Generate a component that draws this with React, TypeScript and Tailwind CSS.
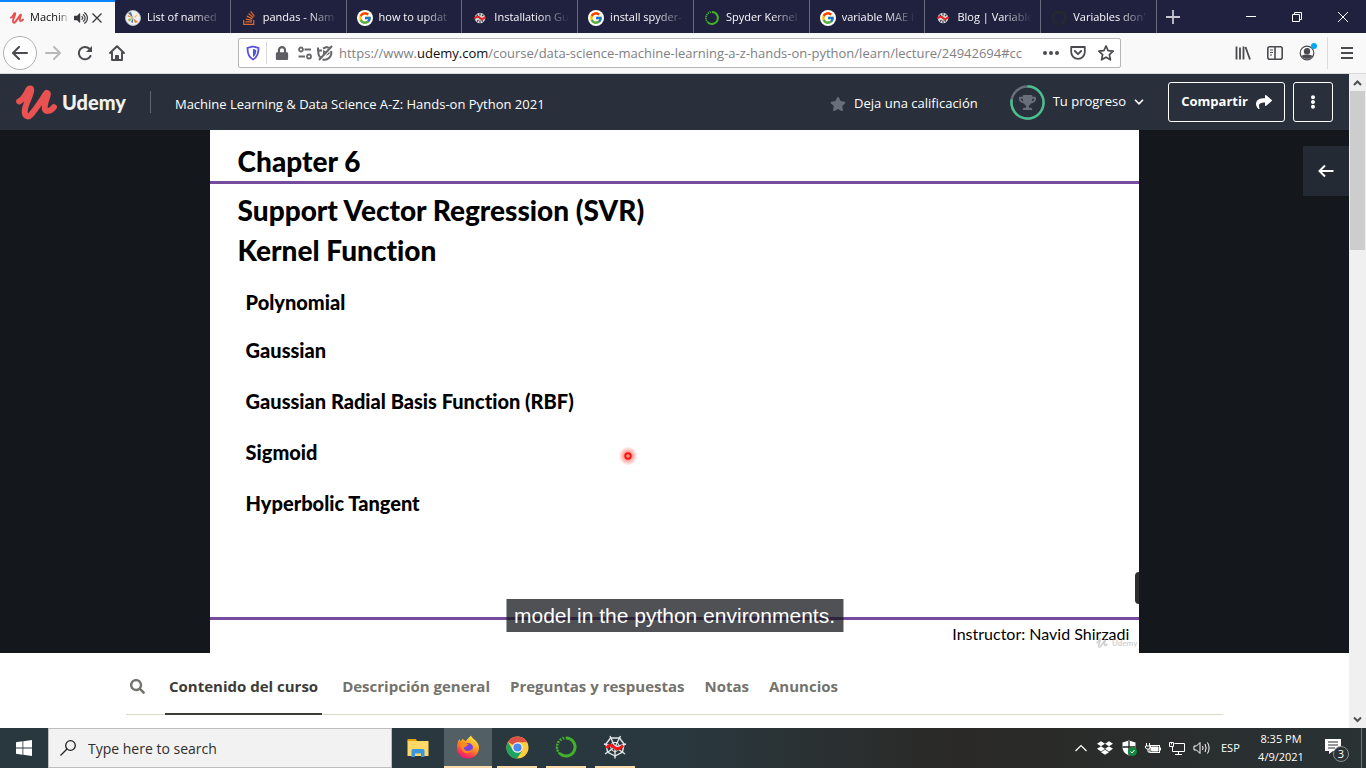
import type { ReactNode } from "react";
import { FcGoogle } from "react-icons/fc";
import {
  FaStackOverflow,
  FaGithub,
  FaLock,
  FaStar,
  FaTrophy,
  FaShare,
  FaEllipsisV,
  FaSearch,
  FaDropbox,
  FaVolumeUp,
} from "react-icons/fa";

function UdemyMark({ className }: { className: string }) {
  return (
    <svg viewBox="0 0 40 34" className={className} fill="none" stroke="currentColor" strokeLinecap="round" strokeLinejoin="round">
      <path d="M3 16C7 14 10 9 12 4.500C13 2.500 15.200 3 14.800 5.500C14 12 9 18 8.500 25C8.200 31 12 32 15 28.500C20 22.500 25 15 29 8.500C30 7 31.500 7.500 31 9.500C30 14 27.500 18 28 22.500C28.500 26.500 33.500 26 37 21.500" strokeWidth="5.800" />
    </svg>
  );
}

function GoogleIcon() {
  return (
    <span className="flex size-4 items-center justify-center rounded-full bg-white">
      <FcGoogle className="size-3.5" />
    </span>
  );
}

function SpyderIcon({ className }: { className: string }) {
  return (
    <svg viewBox="0 0 24 24" className={className} fill="none" stroke="#e4e6e7" strokeWidth="1.400">
      <path d="M12 12L7 1M12 12L17.500 1M12 12L1 9M12 12L23 9M12 12L2 19M12 12L22 19M12 12V23.500" />
      <path d="M7.500 3H16.500L21 9L19.500 17L12 21L4.500 17L3 9Z" />
      <path d="M9.500 7.500H14.500L16.500 11L15.500 15L12 17L8.500 15L7.500 11Z" strokeWidth="1" />
      <path d="M3.500 13C6 9.500 8.500 9.500 11.500 12.500C14 15 16.500 14 20 10.500" stroke="#f01414" strokeWidth="3" />
    </svg>
  );
}

function SpyderBadge() {
  return (
    <svg viewBox="0 0 16 16" className="size-4">
      <circle cx="8" cy="8" r="5.300" fill="#d9d9dc" />
      <path d="M8 3V5.500M8 10.500V13M4.500 4.500L6 6M11.500 4.500L10 6M5 11.500L6.500 10M11 11.500L9.500 10" stroke="#44444f" strokeWidth="1.200" />
      <path d="M2.500 8.500C5 6 6.500 6.500 8 8S11.500 9 13.500 7" fill="none" stroke="#e32222" strokeWidth="2" />
    </svg>
  );
}

function AnacondaIcon({ className }: { className: string }) {
  return (
    <svg viewBox="0 0 24 24" className={className} fill="none" stroke="#43b02a">
      <path d="M12 3A9 9 0 1 1 6 18.700" strokeWidth="3" />
      <path d="M6 18.700A9 9 0 0 1 12 3" strokeWidth="2.600" strokeDasharray="1.600 1.400" />
      <path d="M5 18A10.500 10.500 0 0 1 9 2" strokeWidth="1" strokeDasharray="2 1.500" />
    </svg>
  );
}

function MatplotlibIcon() {
  return (
    <svg viewBox="0 0 16 16" className="size-4">
      <circle cx="8" cy="8" r="7.500" fill="#f1f1f1" stroke="#b7bcc8" />
      <path d="M8 8L3 3L6 2Z" fill="#58707e" />
      <path d="M8 8L13 3.500L11 7Z" fill="#e9b23c" />
      <path d="M8 8L13 12L10 13Z" fill="#ef7b36" />
      <path d="M8 8L3 9L4 12Z" fill="#9fb84a" />
      <path d="M8 8L8 13L6 12Z" fill="#3c78b4" />
      <path d="M8 8L2.500 6.500L3 5Z" fill="#e8892f" />
    </svg>
  );
}

const tabs: { title: string; icon: ReactNode }[] = [
  { title: "List of named", icon: <MatplotlibIcon /> },
  { title: "pandas - Nam", icon: <FaStackOverflow className="size-4 text-[#d9682a]" /> },
  { title: "how to updat", icon: <GoogleIcon /> },
  { title: "Installation Gu", icon: <SpyderBadge /> },
  { title: "install spyder-", icon: <GoogleIcon /> },
  { title: "Spyder Kernel", icon: <AnacondaIcon className="size-4" /> },
  { title: "variable MAE i", icon: <GoogleIcon /> },
  { title: "Blog | Variable", icon: <SpyderBadge /> },
  { title: "Variables don'", icon: <FaGithub className="size-4 text-[#24292e]" /> },
];

function TabBar() {
  return (
    <div className="flex h-[33px] shrink-0 bg-[#20213f] text-[11px] text-[#f9f9fa]">
      <div className="flex w-[115px] shrink-0 items-center border-t-2 border-[#0a84ff] bg-[#f9f9fa] pl-2.5 text-[#0c0c0d]">
        <UdemyMark className="h-3 w-3.5 shrink-0 text-[#ea5252]" />
        <span className="ml-1.5 w-10 overflow-hidden whitespace-nowrap mask-r-from-70%">Machin</span>
        <button aria-label="Mute tab" className="ml-1 text-[#38383d]">
          <FaVolumeUp className="size-3.5" />
        </button>
        <button aria-label="Close tab" className="ml-1">
          <svg viewBox="0 0 10 10" className="size-2.5" stroke="#38383d" strokeWidth="1.300">
            <path d="M0.500 0.500L9.500 9.500M9.500 0.500L0.500 9.500" />
          </svg>
        </button>
      </div>
      <div className="grid w-[1042px] grid-cols-9">
        {tabs.map((tab) => (
          <button key={tab.title} className="flex min-w-0 items-center gap-1.5 border-r border-[#6a6a80] pt-0.5 pr-2 pl-2.5">
            <span className="shrink-0">{tab.icon}</span>
            <span className="min-w-0 flex-1 overflow-hidden text-left whitespace-nowrap mask-r-from-60%">{tab.title}</span>
          </button>
        ))}
      </div>
      <button aria-label="New tab" className="px-2">
        <svg viewBox="0 0 16 16" className="size-4" stroke="#c6c6d0" strokeWidth="1.800">
          <path d="M8 1V15M1 8H15" />
        </svg>
      </button>
      <div className="ml-auto flex">
        <button aria-label="Minimize" className="flex w-[46px] items-center justify-center">
          <svg viewBox="0 0 10 10" className="size-2.5" stroke="white"><path d="M0 4.500H10" /></svg>
        </button>
        <button aria-label="Restore" className="flex w-[46px] items-center justify-center">
          <svg viewBox="0 0 10 10" className="size-2.5" stroke="white" fill="none"><path d="M0.500 2.500H7.500V9.500H0.500ZM2.500 2.500V0.500H9.500V7.500H7.500" /></svg>
        </button>
        <button aria-label="Close" className="flex w-[46px] items-center justify-center">
          <svg viewBox="0 0 10 10" className="size-2.5" stroke="white"><path d="M0 0L10 10M10 0L0 10" /></svg>
        </button>
      </div>
    </div>
  );
}

function NavBar() {
  return (
    <div className="flex h-[41px] shrink-0 items-center border-b border-[#d9d9dc] bg-[#f9f9fa] text-[#4a4a4f]">
      <div className="flex w-[238px] shrink-0 items-center gap-4 pl-[3px]">
        <button aria-label="Back" className="flex size-[34px] items-center justify-center rounded-full border border-[#b1b1b5] bg-white">
          <svg viewBox="0 0 16 16" className="size-4" fill="none" stroke="currentColor" strokeWidth="2" strokeLinecap="round" strokeLinejoin="round"><path d="M15 8H1.500M7 2L1 8L7 14" /></svg>
        </button>
        <button aria-label="Forward" disabled className="-ml-2 text-[#b9b9bb]">
          <svg viewBox="0 0 16 16" className="size-4" fill="none" stroke="currentColor" strokeWidth="2" strokeLinecap="round" strokeLinejoin="round"><path d="M1 8H14.500M9 2L15 8L9 14" /></svg>
        </button>
        <button aria-label="Reload">
          <svg viewBox="0 0 16 16" className="size-4" fill="none" stroke="currentColor" strokeWidth="2" strokeLinecap="round"><path d="M13.500 11A6.200 6.200 0 1 1 12.500 3.800" /><path d="M15 1V7H9Z" fill="currentColor" stroke="none" /></svg>
        </button>
        <button aria-label="Home">
          <svg viewBox="0 0 16 16" className="size-4" fill="none" stroke="currentColor" strokeWidth="1.900" strokeLinecap="round" strokeLinejoin="round"><path d="M1 8L8 1.200L15 8M3 7.500V15H13V7.500" /><path d="M6.500 15V10.500H9.500V15Z" strokeWidth="1" fill="currentColor" /></svg>
        </button>
      </div>
      <div className="flex h-[30px] min-w-0 flex-1 items-center rounded-xs border border-[#b6b6b9] bg-white pr-1.5 pl-[7px]">
        <svg viewBox="0 0 14 16" className="h-4 w-3.5 shrink-0" fill="none">
          <path d="M7 1.500L12.500 3C12.600 8.500 11.500 12 7 14.500C2.500 12 1.400 8.500 1.500 3Z" stroke="#5b4fe0" strokeWidth="1.800" />
          <path d="M7 4L10.300 4.900C10.200 8.500 9.400 10.600 7 12Z" fill="#4a55d8" />
        </svg>
        <span className="mx-1.5 h-[22px] w-px shrink-0 bg-[#d7d7db]" />
        <FaLock className="mr-2 ml-0.5 size-3.5 shrink-0 text-[#5f5f63]" />
        <svg viewBox="0 0 16 16" className="size-4 shrink-0" fill="none" stroke="#67676b" strokeWidth="1.800">
          <circle cx="4" cy="4.500" r="2" /><path d="M7.500 4.500H14M1.500 11.500H8" /><circle cx="12" cy="11.500" r="2" />
        </svg>
        <svg viewBox="0 0 16 16" className="ml-1 size-4 shrink-0" fill="none" stroke="#67676b" strokeWidth="2">
          <path d="M4.500 13.500A6.800 6.800 0 0 1 2.200 4.500M1 2.500V5.500H5M5.500 14.500A6.800 6.800 0 0 0 14 6M6 3.500L9.500 2L12.500 3M2 15L15 1" />
          <path d="M6 9.500V5L9 6.500ZM8.500 11L12.500 6.500V9Z" fill="#67676b" stroke="none" />
        </svg>
        <div
          role="textbox"
          aria-label="Address"
          aria-readonly="true"
          tabIndex={0}
          className="ml-1.5 min-w-0 flex-1 overflow-hidden pt-0.5 text-[13px] whitespace-nowrap text-[#808084]"
        >
          https://www.<span className="text-[#0c0c0d]">udemy.com</span>/course/data-science-machine-learning-a-z-hands-on-python/learn/lecture/24942694#cc
        </div>
        <button aria-label="Page actions" className="ml-1">
          <svg viewBox="0 0 18 6" className="h-1.5 w-[18px]" fill="currentColor"><circle cx="3" cy="3" r="2" /><circle cx="9" cy="3" r="2" /><circle cx="15" cy="3" r="2" /></svg>
        </button>
        <button aria-label="Save to Pocket" className="ml-2.5">
          <svg viewBox="0 0 16 16" className="size-4" fill="none" stroke="currentColor" strokeWidth="1.800" strokeLinecap="round" strokeLinejoin="round"><path d="M1.200 2H14.800V7A6.800 6.800 0 0 1 1.200 7ZM4.800 6L8 9.200L11.200 6" /></svg>
        </button>
        <button aria-label="Bookmark this page" className="ml-3">
          <svg viewBox="0 0 16 16" className="size-4" fill="none" stroke="currentColor" strokeWidth="1.700" strokeLinejoin="round"><path d="M8 1L10.100 5.600L15.200 6.200L11.400 9.600L12.400 14.800L8 12.200L3.600 14.800L4.600 9.600L0.800 6.200L5.900 5.600Z" /></svg>
        </button>
      </div>
      <div className="flex w-[245px] shrink-0 items-center justify-end gap-4 pr-3">
        <button aria-label="Library">
          <svg viewBox="0 0 16 16" className="size-4" stroke="currentColor" strokeWidth="1.800"><path d="M1.500 1.500V14.500M5 2.500V14.500M8.500 1.500V14.500M10.500 2L15 14.500" /></svg>
        </button>
        <button aria-label="Sidebars">
          <svg viewBox="0 0 16 16" className="size-4" fill="none" stroke="currentColor" strokeWidth="1.600"><rect x="0.800" y="1.800" width="14.400" height="12.400" rx="2" /><path d="M8 2V14" /><path d="M3 5H6M3 7.500H6M3 10H5" strokeWidth="1" /></svg>
        </button>
        <button aria-label="Account" className="relative">
          <svg viewBox="0 0 16 16" className="size-4" fill="none" stroke="currentColor" strokeWidth="1.200"><circle cx="8" cy="8" r="6.800" /><circle cx="8" cy="6.200" r="2.600" fill="currentColor" /><path d="M3.500 11C5.500 9.800 10.500 9.800 12.500 11C11 14 5 14 3.500 11Z" fill="currentColor" /></svg>
          <span className="absolute -top-0.5 -right-0.5 size-1.5 rounded-full bg-[#00a8f5]" />
        </button>
        <span className="-mr-1 -ml-1 h-8 w-px bg-[#dcdcdf]" />
        <button aria-label="Open menu">
          <svg viewBox="0 0 14 14" className="size-3.5" stroke="currentColor" strokeWidth="2"><path d="M1 2H13M1 7H13M1 12H13" /></svg>
        </button>
      </div>
    </div>
  );
}

function CourseHeader() {
  return (
    <header className="flex h-14 shrink-0 items-center bg-[#29303b] text-[13px] text-white">
      <a href="#home" className="ml-4 flex items-center text-[#f3f1ee]">
        <UdemyMark className="h-[35px] w-[41px] text-[#ea5252]" />
        <span className="ml-[5px] font-[Lato] text-[20px] font-black">Udemy</span>
      </a>
      <span className="ml-6 h-[22px] w-px bg-[#60656e]" />
      <a href="#course" className="ml-6 pt-1.5">Machine Learning &amp; Data Science A-Z: Hands-on Python 2021</a>
      <button className="ml-auto flex items-center gap-2 pt-1">
        <FaStar className="size-4 text-[#686f7a]" />
        Deja una calificación
      </button>
      <button className="ml-8 flex items-center">
        <span className="relative flex size-[35px] items-center justify-center">
          <svg viewBox="0 0 36 36" className="absolute inset-0" fill="none" strokeWidth="2.400">
            <circle cx="18" cy="18" r="16.500" stroke="#686f7a" />
            <path d="M18 1.500A16.500 16.500 0 1 1 1.800 15" stroke="#46c28e" />
          </svg>
          <FaTrophy className="size-[17px] text-[#686f7a]" />
        </span>
        <span className="ml-2">Tu progreso</span>
        <svg viewBox="0 0 10 6" className="ml-2 h-1.5 w-2.5" fill="none" stroke="white" strokeWidth="1.600"><path d="M1 0.800L5 4.800L9 0.800" /></svg>
      </button>
      <button className="ml-6 flex h-10 w-[117px] items-center justify-center gap-2 rounded-[3px] border border-white text-[13px] font-bold">
        Compartir
        <FaShare className="size-4" />
      </button>
      <button aria-label="More options" className="mr-4 ml-2 flex h-10 w-10 items-center justify-center rounded-[3px] border border-white">
        <FaEllipsisV className="size-3.5" />
      </button>
    </header>
  );
}

const kernels = ["Polynomial", "Gaussian", "Gaussian Radial Basis Function (RBF)", "Sigmoid", "Hyperbolic Tangent"];

function VideoPlayer() {
  return (
    <section className="relative min-h-0 flex-1 bg-[#14171c]">
      <div className="relative mx-auto flex aspect-video h-full flex-col overflow-hidden bg-white font-[Lato] text-black [font-variant-ligatures:none]">
        <h1 className="flex h-[51px] items-center pt-2.5 pl-7 text-[28px] leading-10 font-black">Chapter 6</h1>
        <hr className="h-[3px] border-0 bg-[#764a9c]" />
        <h2 className="pt-1.5 pl-7 text-[28px] leading-10 font-black">
          Support Vector Regression (SVR)
          <br />
          Kernel Function
        </h2>
        <ul className="mt-5 pl-9 text-[20px] font-black">
          {kernels.map((kernel) => (
            <li key={kernel} className="mb-[27px] leading-6 first:mb-6">{kernel}</li>
          ))}
        </ul>
        <div className="mt-auto">
          <hr className="h-[3px] border-0 bg-[#764a9c]" />
          <p className="h-[33px] pr-2.5 text-right text-[16px] leading-7">Instructor: Navid Shirzadi</p>
        </div>
        <div className="absolute right-0.5 bottom-1 flex items-center gap-1 text-[8px] font-bold text-[#d2d2d2]">
          <UdemyMark className="h-2.5 w-3" />
          Udemy
        </div>
        <span className="absolute right-0 bottom-[49px] h-8 w-1 rounded-l bg-[#2e2e2e]" />
        <svg viewBox="0 0 20 20" className="absolute top-[316px] left-[408px] size-5">
          <defs>
            <radialGradient id="glow"><stop offset="0.300" stopColor="#ff3b30" stopOpacity="0.600" /><stop offset="1" stopColor="#ff3b30" stopOpacity="0" /></radialGradient>
          </defs>
          <circle cx="10" cy="10" r="9.500" fill="url(#glow)" />
          <circle cx="10" cy="10" r="2.700" fill="#ff9a90" stroke="#f5180c" strokeWidth="2" />
        </svg>
      </div>
      <p className="absolute bottom-[21px] left-1/2 -translate-x-1/2 bg-[#14171c]/75 px-2 font-['Liberation_Sans'] text-[21px] leading-[33px] whitespace-nowrap text-white">
        model in the python environments.
      </p>
      <button aria-label="Open course content" className="absolute top-4 right-0 flex h-[50px] w-[46px] items-center justify-center bg-[#232a34]">
        <svg viewBox="0 0 16 14" className="h-3.5 w-4" fill="none" stroke="white" strokeWidth="2"><path d="M15.500 7H2M7 1.500L1.500 7L7 12.500" /></svg>
      </button>
    </section>
  );
}

function CourseTabs() {
  return (
    <nav className="flex h-[75px] shrink-0 bg-white px-[126px] pb-[13px] text-[15px] font-bold text-[#73726c]">
      <div className="flex flex-1 items-stretch gap-5 border-b border-[#dcdacb]">
        <button aria-label="Search" className="pt-1.5 pl-1"><FaSearch className="size-[15px]" /></button>
        <a href="#contenido" className="-mb-px flex items-center border-b-2 border-[#3c3b37] px-1 pt-1.5 text-[#3c3b37]">Contenido del curso</a>
        <a href="#descripcion" className="flex items-center pt-1.5">Descripción general</a>
        <a href="#preguntas" className="flex items-center pt-1.5">Preguntas y respuestas</a>
        <a href="#notas" className="flex items-center pt-1.5">Notas</a>
        <a href="#anuncios" className="flex items-center pt-1.5">Anuncios</a>
      </div>
    </nav>
  );
}

function ScrollBar() {
  return (
    <div className="flex w-[17px] shrink-0 flex-col items-center bg-[#f0f0f0]">
      <svg viewBox="0 0 17 17" className="size-[17px] shrink-0" fill="none" stroke="#505050" strokeWidth="2"><path d="M5 11L8.500 7.500L12 11" /></svg>
      <div className="h-[159px] w-[15px] bg-[#cdcdcd]" />
      <svg viewBox="0 0 17 17" className="mt-auto size-[17px] shrink-0" fill="none" stroke="#505050" strokeWidth="2"><path d="M5 6.500L8.500 10L12 6.500" /></svg>
    </div>
  );
}

function FirefoxIcon() {
  return (
    <svg viewBox="0 0 24 24" className="size-6">
      <defs>
        <linearGradient id="flame" x1="0.800" y1="0" x2="0.300" y2="1"><stop offset="0" stopColor="#fff44f" /><stop offset="0.450" stopColor="#ff9a1f" /><stop offset="0.800" stopColor="#ff3750" /><stop offset="1" stopColor="#e31587" /></linearGradient>
      </defs>
      <path d="M15 0.500C16 4 21 5 22.500 10C24.500 17 19.500 23.500 12 23.500C5 23.500 0.500 18 1 12C1.200 8 2.500 5.500 3.500 4L4.500 6.500L7 3.500C7.500 5 8 5.500 10 6C11 4 12.500 3 15 0.500Z" fill="url(#flame)" />
      <circle cx="12" cy="13" r="5" fill="#7542e5" />
      <path d="M4 8C8 6 11 8 13 10C10 9.500 11 13 8 12C7 16 14 18 17 13C17 19 8 20 6 15C4.500 13 4 11 4 8Z" fill="#ff8a16" />
    </svg>
  );
}

function ChromeIcon() {
  return (
    <svg viewBox="0 0 24 24" className="size-[23px]">
      <circle cx="12" cy="12" r="11.500" fill="#ffcd42" />
      <path d="M12 12L2 6.200A11.500 11.500 0 0 1 22 6.500H12Z" fill="#dd5144" />
      <path d="M2 6.200A11.500 11.500 0 0 0 11.500 23.500L17 15L7 14.500Z" fill="#1da362" />
      <circle cx="12" cy="12" r="5.500" fill="#f5f5f5" />
      <circle cx="12" cy="12" r="4.300" fill="#4a8af4" />
    </svg>
  );
}

function Taskbar() {
  return (
    <footer className="flex h-10 shrink-0 items-stretch bg-linear-to-r from-[#29383e] from-50% via-[#2a2926] via-70% to-[#293234] text-white">
      <button aria-label="Start" className="flex w-12 items-center justify-center">
        <svg viewBox="0 0 16 16" className="size-4" fill="white"><path d="M0 2.200L6.500 1.300V7.600H0ZM7.300 1.200L16 0V7.600H7.300ZM0 8.400H6.500V14.700L0 13.800ZM7.300 8.400H16V16L7.300 14.800Z" /></svg>
      </button>
      <label className="flex w-[344px] items-center gap-3 border border-[#bdbdbd] bg-[#f2f2f2] pl-[11px]">
        <svg viewBox="0 0 16 16" className="size-4" fill="none" stroke="#222222" strokeWidth="1.300"><circle cx="10.500" cy="5.500" r="4.800" /><path d="M7 9L0.500 15.500" /></svg>
        <input aria-label="Search Windows" placeholder="Type here to search" className="min-w-0 flex-1 bg-transparent text-[14px] outline-none placeholder:text-[#2e2e2e]" />
      </label>
      <div className="flex">
        <button aria-label="File Explorer" className="mx-[2px] flex w-12 items-center justify-center">
          <svg viewBox="0 0 22 20" className="h-5 w-[22px]"><path d="M0.500 1H9L10.500 4H0.500Z" fill="#e3a008" /><path d="M0.500 3H21.500V18H0.500Z" fill="#ffd866" /><path d="M4.500 19V12.500Q4.500 11 6 11H16Q17.500 11 17.500 12.500V19H14V15.500H8V19Z" fill="#3a96dd" /></svg>
        </button>
        <button aria-label="Firefox" className="flex w-12 items-center justify-center border-b-2 border-[#fcd9a9] bg-[#525f65]"><FirefoxIcon /></button>
        <button aria-label="Chrome" className="mr-1 ml-[5px] flex w-10 items-center justify-center border-b-2 border-[#fcd9a9]"><ChromeIcon /></button>
        <button aria-label="Anaconda" className="mx-[5px] flex w-10 items-center justify-center border-b-2 border-[#fcd9a9]"><AnacondaIcon className="size-6" /></button>
        <button aria-label="Spyder" className="mx-1 flex w-10 items-center justify-center border-b-2 border-[#fcd9a9]"><SpyderIcon className="size-6" /></button>
      </div>
      <div className="ml-auto flex items-center text-[12px]">
        <button aria-label="Show hidden icons"><svg viewBox="0 0 12 8" className="h-2 w-3" fill="none" stroke="white" strokeWidth="1.200"><path d="M0.500 7L6 1.500L11.500 7" /></svg></button>
        <FaDropbox className="ml-2.5 size-4" />
        <svg viewBox="0 0 16 16" className="ml-2 size-4">
          <path d="M8 0.500L14.500 2.500V7C14.500 11 12 14 8 15.500C4 14 1.500 11 1.500 7V2.500Z" fill="white" />
          <path d="M8 1V15M1.500 7H14.500" stroke="#222222" strokeWidth="1.300" />
          <circle cx="11.500" cy="11.500" r="4.500" fill="#10893e" /><path d="M9.500 11.500L11 13L13.500 10" fill="none" stroke="white" />
        </svg>
        <svg viewBox="0 0 16 16" className="ml-2 size-4" fill="none" stroke="white"><rect x="5" y="5.500" width="9.500" height="7" /><path d="M6.500 7H13V11H6.500Z" fill="white" /><path d="M15.500 7.500V10.500M1.500 3V6M4.500 3V6M0.500 6H5.500V8L4 9H2L0.500 8ZM3 9V12H5" /></svg>
        <svg viewBox="0 0 16 16" className="ml-2 size-4" fill="none" stroke="white"><path d="M5.500 3.500H15.500V11.500H3.500V7M9.500 11.500V14.500M6 14.500H13M0.500 2.500H4.500V6.500H0.500ZM2.500 2.500V4.500" /></svg>
        <svg viewBox="0 0 18 16" className="ml-2 h-4 w-[18px]" fill="none" stroke="white"><path d="M1 6H3.500L7 2.500V13.500L3.500 10H1ZM9.500 6Q10.700 8 9.500 10M12 4Q14.300 8 12 12M14.500 2.500Q17.700 8 14.500 13.500" /></svg>
        <span className="ml-2.5 w-5 text-[11px]">ESP</span>
        <div className="ml-3.5 w-[52px] text-center text-[11px] leading-[18px] whitespace-nowrap">8:35 PM<br />4/9/2021</div>
        <button aria-label="3 notifications" className="relative mr-3 ml-[18px] size-6">
          <svg viewBox="0 0 24 24" className="size-6"><path d="M0 3H16V15H8L4 18V15H0Z" fill="white" /><path d="M3 6H13M3 9H13M3 12H10" stroke="#2c3335" /></svg>
          <span className="absolute top-2.5 left-2 flex size-4 items-center justify-center rounded-full border border-[#8a8f90] bg-[#2c3335] text-[11px]">3</span>
        </button>
        <span className="mr-1 h-10 w-px bg-[#6e7577]" />
      </div>
    </footer>
  );
}

export default function App() {
  return (
    <div className="flex h-screen flex-col overflow-hidden bg-white font-['Open_Sans','Noto_Sans',sans-serif]">
      <TabBar />
      <NavBar />
      <div className="flex min-h-0 flex-1">
        <main className="flex min-w-0 flex-1 flex-col">
          <CourseHeader />
          <VideoPlayer />
          <CourseTabs />
        </main>
        <ScrollBar />
      </div>
      <Taskbar />
    </div>
  );
}
